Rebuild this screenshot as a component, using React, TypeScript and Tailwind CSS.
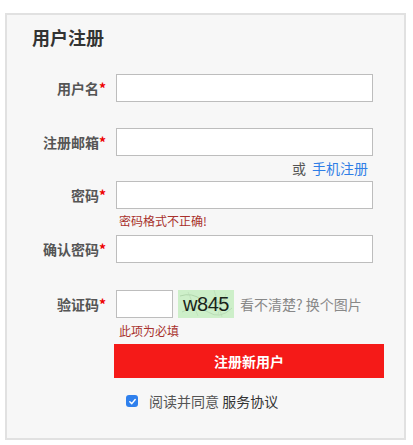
const font = "font-['Noto_Sans_CJK_SC','Noto_Sans',sans-serif]";

function Label({ text }: { text: string }) {
  return (
    <div className="w-[99px] shrink-0 text-right text-[14px] font-bold leading-[20px] text-[#555]">
      {text}
      <span className="text-[#e00]">*</span>
    </div>
  );
}

function Field({ label }: { label: string }) {
  return (
    <div className="flex items-center">
      <Label text={label} />
      <input
        type="text"
        className="ml-[10px] h-[28px] w-[257px] border border-[#bdbdbd] bg-white outline-none"
      />
    </div>
  );
}

function Captcha() {
  return (
    <div className="relative flex h-[28px] w-[56px] items-center justify-center overflow-hidden bg-[#cdefc9]">
      <svg className="absolute inset-0" width="56" height="28" viewBox="0 0 56 28">
        <path d="M2 6 Q14 2 24 10 T50 8" stroke="#a9cfa5" fill="none" strokeWidth="0.8" />
        <path d="M4 22 Q18 14 30 22 T54 18" stroke="#b4d6b0" fill="none" strokeWidth="0.8" />
        <path d="M10 2 L20 26 M36 0 L44 27 M48 4 L40 24" stroke="#b9dab6" fill="none" strokeWidth="0.6" />
      </svg>
      <span className="relative font-['Liberation_Sans',sans-serif] text-[20px] leading-none tracking-[-0.5px] text-[#1a241a]">
        w845
      </span>
    </div>
  );
}

export default function App() {
  return (
    <div className={`h-[445px] w-[413px] bg-white pt-[13px] pl-[5px] ${font}`}>
      <div className="h-[427px] w-[401px] border-2 border-[#e1e1e1] bg-[#f7f7f7]">
        <h1 className="mt-[9px] ml-[25px] text-[18px] font-bold leading-[26px] text-[#333]">用户注册</h1>

        <div className="mt-[24px]">
          <Field label="用户名" />
        </div>

        <div className="mt-[26px]">
          <Field label="注册邮箱" />
        </div>
        <div className="mt-[2px] flex h-[20px] w-[361px] justify-end text-[14px] leading-[20px]">
          <span className="text-[#555]">或</span>
          <span className="ml-[6px] text-[#2f7ee6]">手机注册</span>
        </div>

        <div className="mt-[3px]">
          <Field label="密码" />
        </div>
        <div className="ml-[112px] mt-[3px] text-[12px] leading-[18px] text-[#a8312c]">密码格式不正确!</div>

        <div className="mt-[5px]">
          <Field label="确认密码" />
        </div>

        <div className="mt-[27px] flex items-center">
          <Label text="验证码" />
          <input
            type="text"
            className="ml-[10px] h-[28px] w-[57px] border border-[#bdbdbd] bg-white outline-none"
          />
          <div className="ml-[5px]">
            <Captcha />
          </div>
          <span className="ml-[6px] text-[14px] leading-[20px] text-[#888]">看不清楚? 换个图片</span>
        </div>
        <div className="ml-[112px] mt-[4px] text-[12px] leading-[18px] text-[#a8312c]">此项为必填</div>

        <button
          type="button"
          className="ml-[107px] mt-[4px] flex h-[34px] w-[270px] items-center justify-center bg-[#f51a18] text-[14px] font-bold text-white"
        >
          注册新用户
        </button>

        <div className="ml-[119px] mt-[13px] flex items-center">
          <span className="flex h-[12px] w-[12px] items-center justify-center rounded-[3px] bg-[#2f80ed]">
            <svg width="9" height="9" viewBox="0 0 10 10">
              <path d="M2 5.2 L4.2 7.4 L8 2.8" stroke="white" strokeWidth="1.6" fill="none" strokeLinecap="round" strokeLinejoin="round" />
            </svg>
          </span>
          <span className="ml-[11px] text-[14px] leading-[20px] text-[#555]">
            阅读并同意 <span className="text-[#333]">服务协议</span>
          </span>
        </div>
      </div>
    </div>
  );
}
